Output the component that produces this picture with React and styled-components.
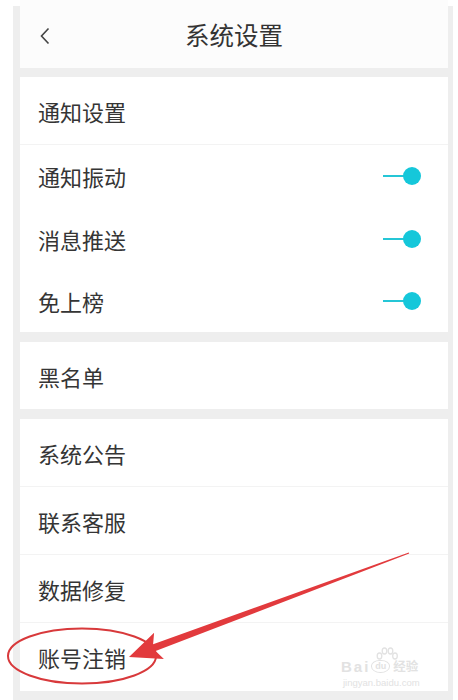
import React from "react";
import styled, { createGlobalStyle } from "styled-components";

const Global = createGlobalStyle`
  html, body { margin: 0; padding: 0; background: #ffffff; }
  body { font-family: "Noto Sans CJK SC", "Noto Sans", sans-serif; }
`;

const Stage = styled.div`
  position: relative;
  width: 458px;
  height: 700px;
  overflow: hidden;
  background: #ffffff;
`;

const Frame = styled.div`
  margin: 6px 0 0 13px;
  width: 440px;
  height: 694px;
  box-sizing: border-box;
  padding: 0 5px 0 7px;
  background: #eeeeee;
  display: flex;
  flex-direction: column;
  gap: 10px;
`;

const Header = styled.div`
  height: 62px;
  margin-top: -6px;
  padding-top: 6px;
  background: #fcfcfc;
  display: flex;
  align-items: center;
  justify-content: center;
  position: relative;
  box-sizing: content-box;
  margin-bottom: -1px;
`;

const Back = styled.div`
  position: absolute;
  left: 19px;
  top: 27px;
  width: 12px;
  height: 18px;
  display: flex;
`;

const Title = styled.div`
  font-size: 24.5px;
  color: #333333;
  line-height: 1;
  margin-top: -4px;
`;

const Card = styled.div`
  background: #ffffff;
  display: flex;
  flex-direction: column;
`;

const Row = styled.div`
  height: ${(p) => p.$h}px;
  padding: 0 27px 0 18px;
  display: flex;
  align-items: center;
  justify-content: space-between;
  border-bottom: ${(p) => (p.$line ? "1px solid #f3f3f3" : "none")};
`;

const Label = styled.span`
  font-size: 22px;
  color: #353535;
  line-height: 1;
`;

const Toggle = styled.div`
  width: 38px;
  height: 20px;
  display: flex;
  align-items: center;
`;

const Track = styled.div`
  width: 22px;
  height: 2px;
  background: #25c6d6;
`;

const Knob = styled.div`
  width: 18px;
  height: 18px;
  border-radius: 50%;
  background: #15c7da;
  margin-left: -2px;
`;

const Overlay = styled.svg`
  position: absolute;
  left: 0;
  top: 0;
  pointer-events: none;
`;

const Watermark = styled.div`
  position: absolute;
  left: 341px;
  top: 657px;
  color: #e2e2e2;
  font-family: "Liberation Sans", sans-serif;
  display: flex;
  flex-direction: column;
  align-items: flex-start;
`;

const WmMain = styled.div`
  display: flex;
  align-items: center;
  height: 18px;
  line-height: 1;
`;

const WmLatin = styled.span`
  font-size: 15px;
  font-weight: bold;
  letter-spacing: 2px;
`;

const WmPad = styled.span`
  font-size: 9px;
  font-weight: bold;
  border: 1.5px solid #e2e2e2;
  border-radius: 45% 45% 50% 50%;
  padding: 1px 3px;
  margin-left: 1px;
`;

const WmCjk = styled.span`
  font-family: "Noto Sans CJK SC", sans-serif;
  font-size: 12.5px;
  font-weight: bold;
  margin-left: 3px;
`;

const WmSub = styled.div`
  font-size: 9.5px;
  margin-top: 2px;
  margin-left: 2px;
`;

function Switch() {
  return (
    <Toggle>
      <Track />
      <Knob />
    </Toggle>
  );
}

const sections = [
  [
    { label: "通知设置", h: 67, line: true },
    { label: "通知振动", h: 62, toggle: true },
    { label: "消息推送", h: 63, toggle: true },
    { label: "免上榜", h: 62, toggle: true },
  ],
  [{ label: "黑名单", h: 67 }],
  [
    { label: "系统公告", h: 67, line: true },
    { label: "联系客服", h: 67, line: true },
    { label: "数据修复", h: 67, line: true },
    { label: "账号注销", h: 68 },
  ],
];

// arrow geometry
const tip = [129, 657];
const tail = [409, 553];
const dx = tail[0] - tip[0];
const dy = tail[1] - tip[1];
const len = Math.hypot(dx, dy);
const u = [dx / len, dy / len];
const n = [-u[1], u[0]];
const P = (base, a, b) => [base[0] + u[0] * a + n[0] * b, base[1] + u[1] * a + n[1] * b];
const arrowPts = [
  tip,
  P(tip, 32, 14),
  P(tip, 27, 3.6),
  P(tail, 0, 0.6),
  P(tail, 0, -0.6),
  P(tip, 27, -3.6),
  P(tip, 32, -14),
]
  .map((p) => p.map((v) => v.toFixed(1)).join(","))
  .join(" ");

export default function App() {
  return (
    <Stage>
      <Global />
      <Frame>
        <Header>
          <Back>
            <svg width="12" height="18" viewBox="0 0 12 18">
              <path d="M9.5 1.5 L2.5 9 L9.5 16.5" fill="none" stroke="#444" strokeWidth="1.6" />
            </svg>
          </Back>
          <Title>系统设置</Title>
        </Header>
        {sections.map((rows, i) => (
          <Card key={i}>
            {rows.map((r) => (
              <Row key={r.label} $h={r.h} $line={r.line}>
                <Label>{r.label}</Label>
                {r.toggle && <Switch />}
              </Row>
            ))}
          </Card>
        ))}
      </Frame>
      <Watermark>
        <WmMain>
          <WmLatin>Bai</WmLatin>
          <WmPad>du</WmPad>
          <WmCjk>经验</WmCjk>
        </WmMain>
        <WmSub>jingyan.baidu.com</WmSub>
      </Watermark>
      <Overlay width="458" height="700" viewBox="0 0 458 700">
        <g fill="none" stroke="#e2e2e2" strokeWidth="1.3">
          <ellipse cx="379.5" cy="656" rx="2.3" ry="3" />
          <ellipse cx="384.5" cy="651" rx="2.3" ry="3" />
          <ellipse cx="390.5" cy="651" rx="2.3" ry="3" />
          <ellipse cx="395" cy="656" rx="2.3" ry="3" />
        </g>
        <ellipse cx="82" cy="656" rx="74" ry="27.5" fill="none" stroke="#d8393b" strokeWidth="2" />
        <polygon points={arrowPts} fill="#e23a3d" />
      </Overlay>
    </Stage>
  );
}
